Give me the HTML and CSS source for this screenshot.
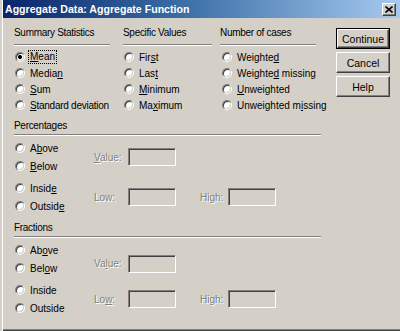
FILE: index.html
```html
<!DOCTYPE html>
<html>
<head>
<meta charset="utf-8">
<link rel="stylesheet" href="styles.css">
</head>
<body>
<div class="window">
  <div class="titlebar">
    <span class="title">Aggregate Data: Aggregate Function</span>
    <span class="close"><svg width="8" height="7" viewBox="0 0 8 7"><path d="M0.5 0.5 L7.5 6.5 M7.5 0.5 L0.5 6.5" stroke="#000" stroke-width="1.6" fill="none"/></svg></span>
  </div>
  <div class="client">
    <div class="main">
      <div class="top">
        <div class="group g1">
          <div class="ghead">Summary Statistics</div>
          <div class="etch"></div>
          <div class="radio"><span class="rb on"></span><span class="focus"><u>M</u>ean</span></div>
          <div class="radio"><span class="rb"></span><span>Media<u>n</u></span></div>
          <div class="radio"><span class="rb"></span><span><u>S</u>um</span></div>
          <div class="radio"><span class="rb"></span><span class="narrow"><u>S</u>tandard deviation</span></div>
        </div>
        <div class="group g2">
          <div class="ghead">Specific Values</div>
          <div class="etch"></div>
          <div class="radio"><span class="rb"></span><span>Fir<u>s</u>t</span></div>
          <div class="radio"><span class="rb"></span><span>Las<u>t</u></span></div>
          <div class="radio"><span class="rb"></span><span><u>M</u>inimum</span></div>
          <div class="radio"><span class="rb"></span><span>Ma<u>x</u>imum</span></div>
        </div>
        <div class="group g3">
          <div class="ghead">Number of cases</div>
          <div class="etch"></div>
          <div class="radio"><span class="rb"></span><span>Weighte<u>d</u></span></div>
          <div class="radio"><span class="rb"></span><span>Weighte<u>d</u> missing</span></div>
          <div class="radio"><span class="rb"></span><span><u>U</u>nweighted</span></div>
          <div class="radio"><span class="rb"></span><span>Unweighted m<u>i</u>ssing</span></div>
        </div>
      </div>

      <div class="section pct">
        <div class="ghead">Percentages</div>
        <div class="etch"></div>
        <div class="pair">
          <div class="radios">
            <div class="radio tall"><span class="rb"></span><span>A<u>b</u>ove</span></div>
            <div class="radio tall"><span class="rb"></span><span><u>B</u>elow</span></div>
          </div>
          <div class="field">
            <span class="flabel"><u>V</u>alue:</span><span class="box"></span>
          </div>
        </div>
        <div class="pair second">
          <div class="radios">
            <div class="radio tall"><span class="rb"></span><span>Insid<u>e</u></span></div>
            <div class="radio tall"><span class="rb"></span><span>Outsid<u>e</u></span></div>
          </div>
          <div class="field">
            <span class="flabel">Low:</span><span class="box"></span>
          </div>
          <div class="field high">
            <span class="flabel">High:</span><span class="box"></span>
          </div>
        </div>
      </div>

      <div class="section frac">
        <div class="ghead">Fractions</div>
        <div class="etch"></div>
        <div class="pair">
          <div class="radios">
            <div class="radio tall"><span class="rb"></span><span>Ab<u>o</u>ve</span></div>
            <div class="radio tall"><span class="rb"></span><span>Bel<u>o</u>w</span></div>
          </div>
          <div class="field lower">
            <span class="flabel">Va<u>l</u>ue:</span><span class="box"></span>
          </div>
        </div>
        <div class="pair second">
          <div class="radios">
            <div class="radio tall"><span class="rb"></span><span>Inside</span></div>
            <div class="radio tall"><span class="rb"></span><span>Outside</span></div>
          </div>
          <div class="field">
            <span class="flabel">Lo<u>w</u>:</span><span class="box"></span>
          </div>
          <div class="field high">
            <span class="flabel">Hi<u>g</u>h:</span><span class="box"></span>
          </div>
        </div>
      </div>
    </div>

    <div class="buttons">
      <div class="btn default"><span class="btn-inner">Continue</span></div>
      <div class="btn"><span class="btn-inner">Cancel</span></div>
      <div class="btn"><span class="btn-inner">Help</span></div>
    </div>
  </div>
</div>
</body>
</html>
```

FILE: styles.css
```css
html, body {
  margin: 0;
  padding: 0;
  background: #d4d0c8;
}

.window {
  width: 400px;
  height: 331px;
  box-sizing: border-box;
  background: #d4d0c8;
  font-family: "Liberation Sans", Arial, sans-serif;
  font-size: 10px;
  color: #000;
  box-shadow: inset 2px 0 0 #d4d0c8, inset 3px 0 0 #ffffff, inset 0 -1px 0 #404040, inset 0 -2px 0 #808080;
  overflow: hidden;
}

.titlebar {
  height: 18px;
  margin-left: 3px;
  display: flex;
  align-items: center;
  justify-content: space-between;
  background: linear-gradient(to right, #0a246a 0%, #3a6ea5 45%, #a6caf0 100%);
}

.title {
  color: #fff;
  font-weight: bold;
  font-size: 10.6px;
  padding-left: 2px;
  white-space: nowrap;
}

.close {
  width: 14px;
  height: 13px;
  box-sizing: border-box;
  margin-right: 4px;
  margin-top: 1px;
  background: #d4d0c8;
  border: 1px solid;
  border-color: #fff #404040 #404040 #fff;
  box-shadow: inset -1px -1px 0 #808080;
  display: flex;
  align-items: center;
  justify-content: center;
}

.close svg {
  display: block;
}

.client {
  display: flex;
  padding-left: 14px;
}

.main {
  width: 307px;
  padding-top: 9px;
}

.top {
  display: flex;
}

.group {
  white-space: nowrap;
}

.g1 {
  width: 96px;
}

.g2 {
  width: 89px;
  margin-left: 13px;
}

.g3 {
  width: 96px;
  margin-left: 8px;
}

.g3 .rb {
  margin-left: 2px;
}

.ghead {
  height: 12px;
  line-height: 12px;
  letter-spacing: -0.3px;
}

.narrow {
  letter-spacing: -0.25px;
}

.etch {
  height: 0;
  border-top: 1px solid #808080;
  border-bottom: 1px solid #ffffff;
}

.top .etch {
  margin-top: 5px;
  margin-bottom: 3px;
}

.radio {
  display: flex;
  align-items: center;
  height: 16px;
  white-space: nowrap;
}

.radio.tall {
  height: 18px;
}

.rb {
  flex: none;
  width: 10px;
  height: 10px;
  margin-left: 1px;
  margin-right: 5px;
  border-radius: 50%;
  position: relative;
  background: linear-gradient(135deg, #808080 50%, #ffffff 50%);
}

.rb::after {
  content: "";
  position: absolute;
  left: 1px;
  top: 1px;
  right: 1px;
  bottom: 1px;
  border-radius: 50%;
  background: #fff;
  box-shadow: inset 1px 1px 0 #404040, inset -1px -1px 0 #d4d0c8;
}

.rb.on::after {
  background: radial-gradient(circle, #000 0, #000 1.8px, #fff 2.3px);
}

.focus {
  outline: 1px dotted #000;
  outline-offset: 0;
  padding: 0 1px;
  margin-left: -1px;
  line-height: 12px;
}

.section {
  margin-top: 7px;
}

.section .etch {
  margin-top: 2px;
  margin-bottom: 3px;
}

.pair {
  display: flex;
  align-items: center;
}

.pair.second {
  margin-top: 4px;
}

.radios {
  width: 80px;
  flex: none;
}

.field {
  display: flex;
  align-items: center;
}

.field.lower {
  margin-top: 9px;
}

.field.high {
  margin-left: 24px;
}

.flabel {
  width: 34px;
  color: #808080;
  text-shadow: 1px 1px 0 #ffffff;
}

.high .flabel {
  width: 28px;
}

.box {
  width: 48px;
  height: 18px;
  box-sizing: border-box;
  border: 1px solid;
  border-color: #808080 #ffffff #ffffff #808080;
  box-shadow: inset 1px 1px 0 #404040, inset -1px -1px 0 #d4d0c8;
  background: #d4d0c8;
}

.buttons {
  margin-left: 15px;
  padding-top: 10px;
  display: flex;
  flex-direction: column;
  gap: 3px;
}

.btn {
  width: 54px;
  height: 21px;
  box-sizing: border-box;
  border: 1px solid;
  border-color: #fff #404040 #404040 #fff;
  box-shadow: inset -1px -1px 0 #808080;
  display: flex;
}

.btn.default {
  border: 1px solid #000;
  box-shadow: none;
}

.btn-inner {
  flex: 1;
  display: flex;
  align-items: center;
  justify-content: center;
  font-size: 10.5px;
}

.btn.default .btn-inner {
  border: 1px solid;
  border-color: #fff #404040 #404040 #fff;
  box-shadow: inset -1px -1px 0 #808080;
}
```
